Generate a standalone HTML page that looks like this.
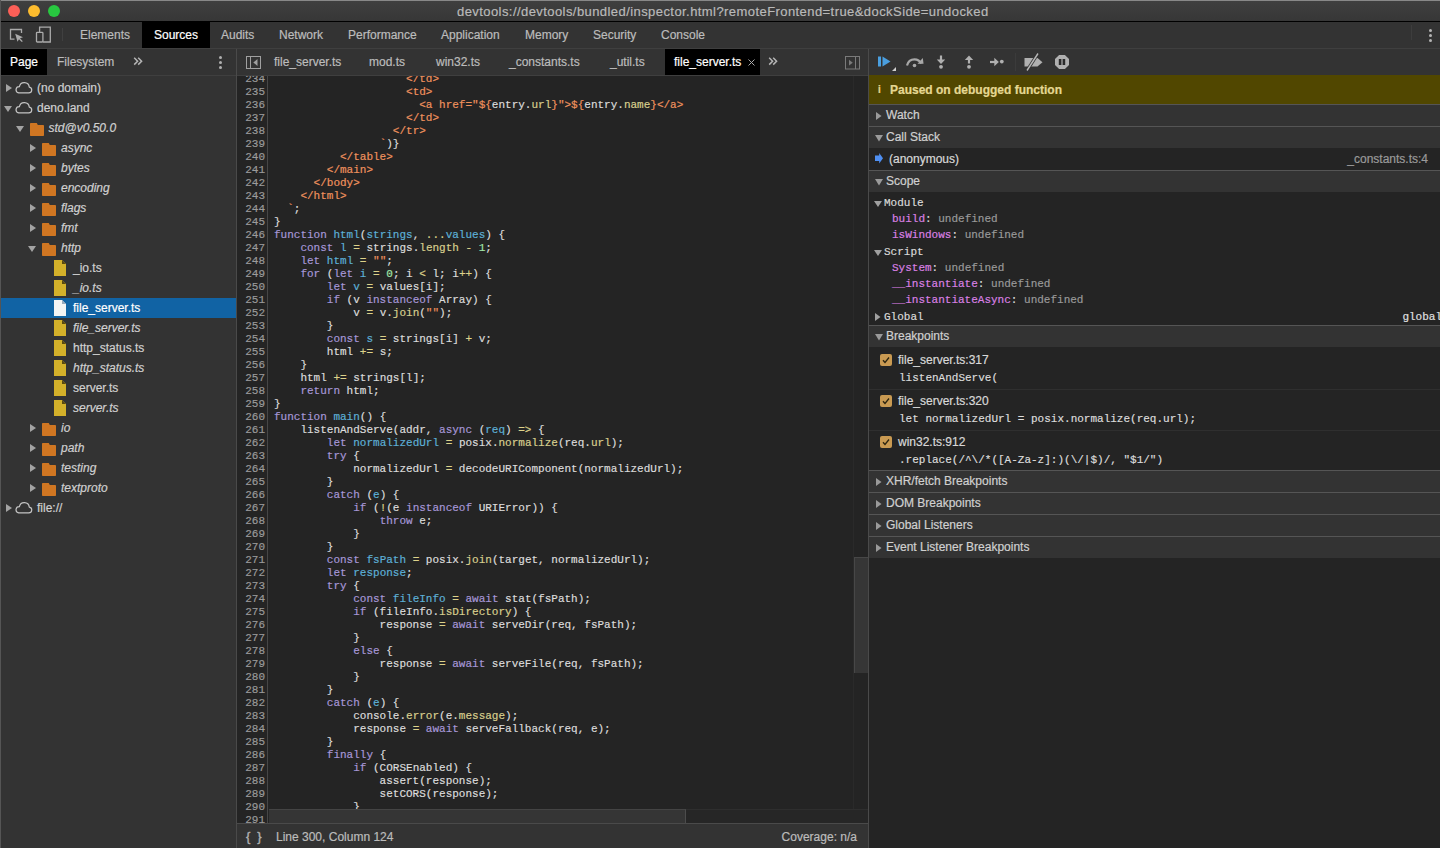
<!DOCTYPE html><html><head><meta charset="utf-8"><style>
*{box-sizing:border-box}
html,body{margin:0;padding:0;width:1440px;height:848px;overflow:hidden;background:#242424;font-family:"Liberation Sans",sans-serif;font-size:12px;color:#cdcdcd;-webkit-text-stroke:0.2px currentColor}
.m{font-family:"Liberation Mono";-webkit-text-stroke:0.18px currentColor}
.a{position:absolute}
.tx{position:absolute;white-space:nowrap}
#title{left:0;top:0;width:1440px;height:22px;background:#3b3b3b;border-top:1px solid #888;border-bottom:1px solid #000;background:linear-gradient(#3f3f3f,#373737)}
#title .t{position:absolute;left:457px;top:3px;font-size:13px;letter-spacing:0.43px;color:#b9b9b9;white-space:nowrap}
.dot{position:absolute;top:4px;width:12px;height:12px;border-radius:50%}
#maintb{left:0;top:22px;width:1440px;height:27px;background:#333;border-bottom:1px solid #3f3f3f}
.mt{position:absolute;top:0;height:26px;line-height:27px;color:#bcbcbc;white-space:nowrap}
.mt.sel{background:#000;color:#fff}
#nav{left:0;top:49px;width:236px;height:799px;background:#333;border-left:1px solid #505050}
#navhdr{left:0;top:0;width:236px;height:27px;border-bottom:1px solid #3f3f3f}
.row{position:absolute;left:0;width:236px;height:20px}
.row .l{position:absolute;top:0;line-height:20px;white-space:nowrap;color:#d0d0d0}
.row.sel{background:#1163a4}
.row.sel .l{color:#fff}
.it{font-style:italic}
#vdiv1{left:236px;top:49px;width:1px;height:799px;background:#4a4a4a}
#editor{left:237px;top:49px;width:631px;height:799px;background:#242424}
#edhdr{left:0;top:0;width:631px;height:27px;background:#333;border-bottom:1px solid #3f3f3f}
#vdiv2{left:868px;top:49px;width:1px;height:799px;background:#4a4a4a}
#side{left:869px;top:49px;width:571px;height:799px;background:#242424}
.ln{position:absolute;left:0;width:28px;height:13px;line-height:13px;text-align:right;font-family:"Liberation Mono";-webkit-text-stroke:0.18px currentColor;font-size:11px;color:#9b9b9b}
.cl{position:absolute;left:37px;height:13px;line-height:13px;white-space:pre;font-family:"Liberation Mono";-webkit-text-stroke:0.18px currentColor;font-size:11px;color:#dcdcdc}
.ck{color:#a797d8}.cd{color:#5db0d7}.co{color:#ddd28a}.cp{color:#d8cf8e}.cn{color:#a1e6a8}.cs{color:#f0925e}
.pn{color:#db80e4}.un{color:#9a9a9a}
</style></head><body>
<div id="title" class="a">
  <div class="dot" style="left:8px;background:#fc5f57"></div>
  <div class="dot" style="left:28px;background:#fdbc2e"></div>
  <div class="dot" style="left:48px;background:#28c840"></div>
  <div class="t">devtools://devtools/bundled/inspector.html?remoteFrontend=true&amp;dockSide=undocked</div>
</div>
<div id="maintb" class="a">
  <svg class="a" style="left:9px;top:6px" width="15" height="14" viewBox="0 0 15 14"><path d="M5.5 11.2H1.5V1.5H12.5V5" fill="none" stroke="#ababab" stroke-width="1.3"/><path d="M6.2 5.7L14 9.3L11 10.3L13.8 13.2L12.8 14L10 11.2L8.5 13.8Z" fill="#ababab"/></svg>
  <svg class="a" style="left:35px;top:4px" width="17" height="17" viewBox="0 0 17 17"><path d="M4.6 6.3V1.2H15.3V16H8" fill="none" stroke="#ababab" stroke-width="1.3"/><rect x="1.5" y="6.3" width="6.4" height="9.7" rx="0.8" fill="none" stroke="#ababab" stroke-width="1.3"/></svg>
  <div class="a" style="left:62px;top:6px;width:1px;height:13px;background:#404040"></div>
  <div class="mt" style="left:80px">Elements</div>
  <div class="mt sel" style="left:142px;width:68px;padding-left:12px">Sources</div>
  <div class="mt" style="left:221px">Audits</div>
  <div class="mt" style="left:279px">Network</div>
  <div class="mt" style="left:348px">Performance</div>
  <div class="mt" style="left:441px">Application</div>
  <div class="mt" style="left:525px">Memory</div>
  <div class="mt" style="left:593px">Security</div>
  <div class="mt" style="left:661px">Console</div>
  <div class="a" style="left:1411px;top:3px;width:1px;height:15px;background:#3d3d3d"></div>
  <div class="a" style="left:1429px;top:7px;width:3px;height:3px;border-radius:50%;background:#b5b5b5"></div>
  <div class="a" style="left:1429px;top:12px;width:3px;height:3px;border-radius:50%;background:#b5b5b5"></div>
  <div class="a" style="left:1429px;top:17px;width:3px;height:3px;border-radius:50%;background:#b5b5b5"></div>
</div>
<div id="nav" class="a">
<div id="navhdr" class="a">
<div class="a" style="left:0;top:0;width:46px;height:26px;background:#000"></div>
<div class="tx" style="left:9px;top:0;line-height:26px;color:#fff">Page</div>
<div class="tx" style="left:56px;top:0;line-height:26px;color:#bcbcbc">Filesystem</div>
<svg class="a" style="left:132px;top:8px" width="10" height="9" viewBox="0 0 10 9"><path d="M1.2 0.8L4.6 4.2L1.2 7.6M5.2 0.8L8.6 4.2L5.2 7.6" fill="none" stroke="#b5b5b5" stroke-width="1.5"/></svg>
<div class="a" style="left:218px;top:7px;width:3px;height:3px;border-radius:50%;background:#b0b0b0"></div>
<div class="a" style="left:218px;top:12px;width:3px;height:3px;border-radius:50%;background:#b0b0b0"></div>
<div class="a" style="left:218px;top:17px;width:3px;height:3px;border-radius:50%;background:#b0b0b0"></div>
</div>
<div class="row" style="top:29px">
<svg class="a" style="left:5px;top:6px" width="6" height="8" viewBox="0 0 6 8"><path d="M0 0L6 4L0 8Z" fill="#a3a3a3"/></svg>
<svg class="a" style="left:12.5px;top:2.5px" width="19" height="13" viewBox="-0.5 -0.5 19 13"><path d="M4.2 11.4H14.3A2.95 2.95 0 0 0 14.8 5.55A5.05 5.05 0 0 0 4.9 5.05A3.2 3.2 0 0 0 4.2 11.4Z" fill="none" stroke="#c4c4c4" stroke-width="1.2"/></svg>
<div class="l" style="left:36px">(no domain)</div>
</div>
<div class="row" style="top:49px">
<svg class="a" style="left:3px;top:8px" width="8" height="6" viewBox="0 0 8 6"><path d="M0 0L8 0L4 6Z" fill="#a3a3a3"/></svg>
<svg class="a" style="left:12.5px;top:2.5px" width="19" height="13" viewBox="-0.5 -0.5 19 13"><path d="M4.2 11.4H14.3A2.95 2.95 0 0 0 14.8 5.55A5.05 5.05 0 0 0 4.9 5.05A3.2 3.2 0 0 0 4.2 11.4Z" fill="none" stroke="#c4c4c4" stroke-width="1.2"/></svg>
<div class="l" style="left:36px">deno.land</div>
</div>
<div class="row" style="top:69px">
<svg class="a" style="left:15px;top:8px" width="8" height="6" viewBox="0 0 8 6"><path d="M0 0L8 0L4 6Z" fill="#a3a3a3"/></svg>
<svg class="a" style="left:29px;top:4.8px" width="14" height="13" viewBox="0 0 14 13"><path d="M0 0.8Q0 0 0.8 0H6.8L7.8 2H13.2Q14 2 14 2.8V12.2Q14 13 13.2 13H0.8Q0 13 0 12.2Z" fill="#d07622"/></svg>
<div class="l it" style="left:47.5px">std@v0.50.0</div>
</div>
<div class="row" style="top:89px">
<svg class="a" style="left:29px;top:6px" width="6" height="8" viewBox="0 0 6 8"><path d="M0 0L6 4L0 8Z" fill="#a3a3a3"/></svg>
<svg class="a" style="left:41px;top:4.8px" width="14" height="13" viewBox="0 0 14 13"><path d="M0 0.8Q0 0 0.8 0H6.8L7.8 2H13.2Q14 2 14 2.8V12.2Q14 13 13.2 13H0.8Q0 13 0 12.2Z" fill="#d07622"/></svg>
<div class="l it" style="left:60px">async</div>
</div>
<div class="row" style="top:109px">
<svg class="a" style="left:29px;top:6px" width="6" height="8" viewBox="0 0 6 8"><path d="M0 0L6 4L0 8Z" fill="#a3a3a3"/></svg>
<svg class="a" style="left:41px;top:4.8px" width="14" height="13" viewBox="0 0 14 13"><path d="M0 0.8Q0 0 0.8 0H6.8L7.8 2H13.2Q14 2 14 2.8V12.2Q14 13 13.2 13H0.8Q0 13 0 12.2Z" fill="#d07622"/></svg>
<div class="l it" style="left:60px">bytes</div>
</div>
<div class="row" style="top:129px">
<svg class="a" style="left:29px;top:6px" width="6" height="8" viewBox="0 0 6 8"><path d="M0 0L6 4L0 8Z" fill="#a3a3a3"/></svg>
<svg class="a" style="left:41px;top:4.8px" width="14" height="13" viewBox="0 0 14 13"><path d="M0 0.8Q0 0 0.8 0H6.8L7.8 2H13.2Q14 2 14 2.8V12.2Q14 13 13.2 13H0.8Q0 13 0 12.2Z" fill="#d07622"/></svg>
<div class="l it" style="left:60px">encoding</div>
</div>
<div class="row" style="top:149px">
<svg class="a" style="left:29px;top:6px" width="6" height="8" viewBox="0 0 6 8"><path d="M0 0L6 4L0 8Z" fill="#a3a3a3"/></svg>
<svg class="a" style="left:41px;top:4.8px" width="14" height="13" viewBox="0 0 14 13"><path d="M0 0.8Q0 0 0.8 0H6.8L7.8 2H13.2Q14 2 14 2.8V12.2Q14 13 13.2 13H0.8Q0 13 0 12.2Z" fill="#d07622"/></svg>
<div class="l it" style="left:60px">flags</div>
</div>
<div class="row" style="top:169px">
<svg class="a" style="left:29px;top:6px" width="6" height="8" viewBox="0 0 6 8"><path d="M0 0L6 4L0 8Z" fill="#a3a3a3"/></svg>
<svg class="a" style="left:41px;top:4.8px" width="14" height="13" viewBox="0 0 14 13"><path d="M0 0.8Q0 0 0.8 0H6.8L7.8 2H13.2Q14 2 14 2.8V12.2Q14 13 13.2 13H0.8Q0 13 0 12.2Z" fill="#d07622"/></svg>
<div class="l it" style="left:60px">fmt</div>
</div>
<div class="row" style="top:189px">
<svg class="a" style="left:27px;top:8px" width="8" height="6" viewBox="0 0 8 6"><path d="M0 0L8 0L4 6Z" fill="#a3a3a3"/></svg>
<svg class="a" style="left:41px;top:4.8px" width="14" height="13" viewBox="0 0 14 13"><path d="M0 0.8Q0 0 0.8 0H6.8L7.8 2H13.2Q14 2 14 2.8V12.2Q14 13 13.2 13H0.8Q0 13 0 12.2Z" fill="#d07622"/></svg>
<div class="l it" style="left:60px">http</div>
</div>
<div class="row" style="top:209px">
<svg class="a" style="left:53px;top:2px" width="12" height="16" viewBox="0 0 12 16"><path d="M0 0H8L12 4V16H0Z" fill="#d4b12a"/><path d="M8 0L12 4H8Z" fill="#5a4a10"/></svg>
<div class="l" style="left:72px">_io.ts</div>
</div>
<div class="row" style="top:229px">
<svg class="a" style="left:53px;top:2px" width="12" height="16" viewBox="0 0 12 16"><path d="M0 0H8L12 4V16H0Z" fill="#d4b12a"/><path d="M8 0L12 4H8Z" fill="#5a4a10"/></svg>
<div class="l it" style="left:72px">_io.ts</div>
</div>
<div class="row sel" style="top:249px">
<svg class="a" style="left:53px;top:2px" width="12" height="16" viewBox="0 0 12 16"><path d="M0 0H8L12 4V16H0Z" fill="#f4f4f4"/><path d="M8 0L12 4H8Z" fill="#9ab"/></svg>
<div class="l" style="left:72px">file_server.ts</div>
</div>
<div class="row" style="top:269px">
<svg class="a" style="left:53px;top:2px" width="12" height="16" viewBox="0 0 12 16"><path d="M0 0H8L12 4V16H0Z" fill="#d4b12a"/><path d="M8 0L12 4H8Z" fill="#5a4a10"/></svg>
<div class="l it" style="left:72px">file_server.ts</div>
</div>
<div class="row" style="top:289px">
<svg class="a" style="left:53px;top:2px" width="12" height="16" viewBox="0 0 12 16"><path d="M0 0H8L12 4V16H0Z" fill="#d4b12a"/><path d="M8 0L12 4H8Z" fill="#5a4a10"/></svg>
<div class="l" style="left:72px">http_status.ts</div>
</div>
<div class="row" style="top:309px">
<svg class="a" style="left:53px;top:2px" width="12" height="16" viewBox="0 0 12 16"><path d="M0 0H8L12 4V16H0Z" fill="#d4b12a"/><path d="M8 0L12 4H8Z" fill="#5a4a10"/></svg>
<div class="l it" style="left:72px">http_status.ts</div>
</div>
<div class="row" style="top:329px">
<svg class="a" style="left:53px;top:2px" width="12" height="16" viewBox="0 0 12 16"><path d="M0 0H8L12 4V16H0Z" fill="#d4b12a"/><path d="M8 0L12 4H8Z" fill="#5a4a10"/></svg>
<div class="l" style="left:72px">server.ts</div>
</div>
<div class="row" style="top:349px">
<svg class="a" style="left:53px;top:2px" width="12" height="16" viewBox="0 0 12 16"><path d="M0 0H8L12 4V16H0Z" fill="#d4b12a"/><path d="M8 0L12 4H8Z" fill="#5a4a10"/></svg>
<div class="l it" style="left:72px">server.ts</div>
</div>
<div class="row" style="top:369px">
<svg class="a" style="left:29px;top:6px" width="6" height="8" viewBox="0 0 6 8"><path d="M0 0L6 4L0 8Z" fill="#a3a3a3"/></svg>
<svg class="a" style="left:41px;top:4.8px" width="14" height="13" viewBox="0 0 14 13"><path d="M0 0.8Q0 0 0.8 0H6.8L7.8 2H13.2Q14 2 14 2.8V12.2Q14 13 13.2 13H0.8Q0 13 0 12.2Z" fill="#d07622"/></svg>
<div class="l it" style="left:60px">io</div>
</div>
<div class="row" style="top:389px">
<svg class="a" style="left:29px;top:6px" width="6" height="8" viewBox="0 0 6 8"><path d="M0 0L6 4L0 8Z" fill="#a3a3a3"/></svg>
<svg class="a" style="left:41px;top:4.8px" width="14" height="13" viewBox="0 0 14 13"><path d="M0 0.8Q0 0 0.8 0H6.8L7.8 2H13.2Q14 2 14 2.8V12.2Q14 13 13.2 13H0.8Q0 13 0 12.2Z" fill="#d07622"/></svg>
<div class="l it" style="left:60px">path</div>
</div>
<div class="row" style="top:409px">
<svg class="a" style="left:29px;top:6px" width="6" height="8" viewBox="0 0 6 8"><path d="M0 0L6 4L0 8Z" fill="#a3a3a3"/></svg>
<svg class="a" style="left:41px;top:4.8px" width="14" height="13" viewBox="0 0 14 13"><path d="M0 0.8Q0 0 0.8 0H6.8L7.8 2H13.2Q14 2 14 2.8V12.2Q14 13 13.2 13H0.8Q0 13 0 12.2Z" fill="#d07622"/></svg>
<div class="l it" style="left:60px">testing</div>
</div>
<div class="row" style="top:429px">
<svg class="a" style="left:29px;top:6px" width="6" height="8" viewBox="0 0 6 8"><path d="M0 0L6 4L0 8Z" fill="#a3a3a3"/></svg>
<svg class="a" style="left:41px;top:4.8px" width="14" height="13" viewBox="0 0 14 13"><path d="M0 0.8Q0 0 0.8 0H6.8L7.8 2H13.2Q14 2 14 2.8V12.2Q14 13 13.2 13H0.8Q0 13 0 12.2Z" fill="#d07622"/></svg>
<div class="l it" style="left:60px">textproto</div>
</div>
<div class="row" style="top:449px">
<svg class="a" style="left:5px;top:6px" width="6" height="8" viewBox="0 0 6 8"><path d="M0 0L6 4L0 8Z" fill="#a3a3a3"/></svg>
<svg class="a" style="left:12.5px;top:2.5px" width="19" height="13" viewBox="-0.5 -0.5 19 13"><path d="M4.2 11.4H14.3A2.95 2.95 0 0 0 14.8 5.55A5.05 5.05 0 0 0 4.9 5.05A3.2 3.2 0 0 0 4.2 11.4Z" fill="none" stroke="#c4c4c4" stroke-width="1.2"/></svg>
<div class="l" style="left:36px">file://</div>
</div>
</div>
<div id="vdiv1" class="a"></div>
<div id="editor" class="a">
<div id="edhdr" class="a">
<svg class="a" style="left:9px;top:7px" width="15" height="13" viewBox="0 0 15 13"><rect x="0.5" y="0.5" width="14" height="12" fill="none" stroke="#a0a0a0"/><path d="M4.5 0.5V12.5" stroke="#a0a0a0"/><path d="M11.5 3V10L7.3 6.5Z" fill="#a0a0a0"/></svg>
<div class="tx" style="left:37px;top:0;line-height:26px;color:#bcbcbc">file_server.ts</div>
<div class="tx" style="left:132px;top:0;line-height:26px;color:#bcbcbc">mod.ts</div>
<div class="tx" style="left:199px;top:0;line-height:26px;color:#bcbcbc">win32.ts</div>
<div class="tx" style="left:272px;top:0;line-height:26px;color:#bcbcbc">_constants.ts</div>
<div class="tx" style="left:373px;top:0;line-height:26px;color:#bcbcbc">_util.ts</div>
<div class="a" style="left:428px;top:0;width:95px;height:26px;background:#000"></div>
<div class="tx" style="left:437px;top:0;line-height:26px;color:#fff">file_server.ts</div>
<svg class="a" style="left:511px;top:10px" width="7" height="7" viewBox="0 0 7 7"><path d="M0.5 0.5L6.5 6.5M6.5 0.5L0.5 6.5" stroke="#b0b0b0" stroke-width="0.95"/></svg>
<svg class="a" style="left:531px;top:8px" width="10" height="9" viewBox="0 0 10 9"><path d="M1.2 0.8L4.6 4.2L1.2 7.6M5.2 0.8L8.6 4.2L5.2 7.6" fill="none" stroke="#b5b5b5" stroke-width="1.5"/></svg>
<svg class="a" style="left:608px;top:7px" width="15" height="14" viewBox="0 0 15 14"><rect x="0.5" y="0.5" width="14" height="12.5" fill="none" stroke="#7a7a7a"/><path d="M10.5 0.5V13" stroke="#7a7a7a"/><path d="M4 3.8V9.6L7.8 6.7Z" fill="#7a7a7a"/></svg>
</div>
<div class="a" id="codevp" style="left:0;top:27px;width:631px;height:747px;overflow:hidden;background:#242424">
<div class="a" style="left:0;top:0;width:31px;height:747px;background:#242424;border-right:1px solid #474747"></div>
<div class="ln" style="top:-3px">234</div>
<div class="cl" style="top:-3px">                    <span class="cs">&lt;/td&gt;</span></div>
<div class="ln" style="top:10px">235</div>
<div class="cl" style="top:10px">                    <span class="cs">&lt;td&gt;</span></div>
<div class="ln" style="top:23px">236</div>
<div class="cl" style="top:23px">                      <span class="cs">&lt;a href=&quot;${</span>entry.<span class="cp">url</span><span class="cs">}&quot;&gt;${</span>entry.<span class="cp">name</span><span class="cs">}&lt;/a&gt;</span></div>
<div class="ln" style="top:36px">237</div>
<div class="cl" style="top:36px">                    <span class="cs">&lt;/td&gt;</span></div>
<div class="ln" style="top:49px">238</div>
<div class="cl" style="top:49px">                  <span class="cs">&lt;/tr&gt;</span></div>
<div class="ln" style="top:62px">239</div>
<div class="cl" style="top:62px">                <span class="cs">`</span>)}</div>
<div class="ln" style="top:75px">240</div>
<div class="cl" style="top:75px">          <span class="cs">&lt;/table&gt;</span></div>
<div class="ln" style="top:88px">241</div>
<div class="cl" style="top:88px">        <span class="cs">&lt;/main&gt;</span></div>
<div class="ln" style="top:101px">242</div>
<div class="cl" style="top:101px">      <span class="cs">&lt;/body&gt;</span></div>
<div class="ln" style="top:114px">243</div>
<div class="cl" style="top:114px">    <span class="cs">&lt;/html&gt;</span></div>
<div class="ln" style="top:127px">244</div>
<div class="cl" style="top:127px">  <span class="cs">`</span>;</div>
<div class="ln" style="top:140px">245</div>
<div class="cl" style="top:140px">}</div>
<div class="ln" style="top:153px">246</div>
<div class="cl" style="top:153px"><span class="ck">function</span> <span class="cd">html</span>(<span class="cd">strings</span>, <span class="co">...</span><span class="cd">values</span>) {</div>
<div class="ln" style="top:166px">247</div>
<div class="cl" style="top:166px">    <span class="ck">const</span> <span class="cd">l</span> <span class="co">=</span> strings.<span class="cp">length</span> <span class="co">-</span> <span class="cn">1</span>;</div>
<div class="ln" style="top:179px">248</div>
<div class="cl" style="top:179px">    <span class="ck">let</span> <span class="cd">html</span> <span class="co">=</span> <span class="cs">&quot;&quot;</span>;</div>
<div class="ln" style="top:192px">249</div>
<div class="cl" style="top:192px">    <span class="ck">for</span> (<span class="ck">let</span> <span class="cd">i</span> <span class="co">=</span> <span class="cn">0</span>; i <span class="co">&lt;</span> l; i<span class="co">++</span>) {</div>
<div class="ln" style="top:205px">250</div>
<div class="cl" style="top:205px">        <span class="ck">let</span> <span class="cd">v</span> <span class="co">=</span> values[i];</div>
<div class="ln" style="top:218px">251</div>
<div class="cl" style="top:218px">        <span class="ck">if</span> (v <span class="ck">instanceof</span> Array) {</div>
<div class="ln" style="top:231px">252</div>
<div class="cl" style="top:231px">            v <span class="co">=</span> v.<span class="cp">join</span>(<span class="cs">&quot;&quot;</span>);</div>
<div class="ln" style="top:244px">253</div>
<div class="cl" style="top:244px">        }</div>
<div class="ln" style="top:257px">254</div>
<div class="cl" style="top:257px">        <span class="ck">const</span> <span class="cd">s</span> <span class="co">=</span> strings[i] <span class="co">+</span> v;</div>
<div class="ln" style="top:270px">255</div>
<div class="cl" style="top:270px">        html <span class="co">+=</span> s;</div>
<div class="ln" style="top:283px">256</div>
<div class="cl" style="top:283px">    }</div>
<div class="ln" style="top:296px">257</div>
<div class="cl" style="top:296px">    html <span class="co">+=</span> strings[l];</div>
<div class="ln" style="top:309px">258</div>
<div class="cl" style="top:309px">    <span class="ck">return</span> html;</div>
<div class="ln" style="top:322px">259</div>
<div class="cl" style="top:322px">}</div>
<div class="ln" style="top:335px">260</div>
<div class="cl" style="top:335px"><span class="ck">function</span> <span class="cd">main</span>() {</div>
<div class="ln" style="top:348px">261</div>
<div class="cl" style="top:348px">    listenAndServe(addr, <span class="ck">async</span> (<span class="cd">req</span>) <span class="co">=&gt;</span> {</div>
<div class="ln" style="top:361px">262</div>
<div class="cl" style="top:361px">        <span class="ck">let</span> <span class="cd">normalizedUrl</span> <span class="co">=</span> posix.<span class="cp">normalize</span>(req.<span class="cp">url</span>);</div>
<div class="ln" style="top:374px">263</div>
<div class="cl" style="top:374px">        <span class="ck">try</span> {</div>
<div class="ln" style="top:387px">264</div>
<div class="cl" style="top:387px">            normalizedUrl <span class="co">=</span> decodeURIComponent(normalizedUrl);</div>
<div class="ln" style="top:400px">265</div>
<div class="cl" style="top:400px">        }</div>
<div class="ln" style="top:413px">266</div>
<div class="cl" style="top:413px">        <span class="ck">catch</span> (<span class="cd">e</span>) {</div>
<div class="ln" style="top:426px">267</div>
<div class="cl" style="top:426px">            <span class="ck">if</span> (<span class="co">!</span>(e <span class="ck">instanceof</span> URIError)) {</div>
<div class="ln" style="top:439px">268</div>
<div class="cl" style="top:439px">                <span class="ck">throw</span> e;</div>
<div class="ln" style="top:452px">269</div>
<div class="cl" style="top:452px">            }</div>
<div class="ln" style="top:465px">270</div>
<div class="cl" style="top:465px">        }</div>
<div class="ln" style="top:478px">271</div>
<div class="cl" style="top:478px">        <span class="ck">const</span> <span class="cd">fsPath</span> <span class="co">=</span> posix.<span class="cp">join</span>(target, normalizedUrl);</div>
<div class="ln" style="top:491px">272</div>
<div class="cl" style="top:491px">        <span class="ck">let</span> <span class="cd">response</span>;</div>
<div class="ln" style="top:504px">273</div>
<div class="cl" style="top:504px">        <span class="ck">try</span> {</div>
<div class="ln" style="top:517px">274</div>
<div class="cl" style="top:517px">            <span class="ck">const</span> <span class="cd">fileInfo</span> <span class="co">=</span> <span class="ck">await</span> stat(fsPath);</div>
<div class="ln" style="top:530px">275</div>
<div class="cl" style="top:530px">            <span class="ck">if</span> (fileInfo.<span class="cp">isDirectory</span>) {</div>
<div class="ln" style="top:543px">276</div>
<div class="cl" style="top:543px">                response <span class="co">=</span> <span class="ck">await</span> serveDir(req, fsPath);</div>
<div class="ln" style="top:556px">277</div>
<div class="cl" style="top:556px">            }</div>
<div class="ln" style="top:569px">278</div>
<div class="cl" style="top:569px">            <span class="ck">else</span> {</div>
<div class="ln" style="top:582px">279</div>
<div class="cl" style="top:582px">                response <span class="co">=</span> <span class="ck">await</span> serveFile(req, fsPath);</div>
<div class="ln" style="top:595px">280</div>
<div class="cl" style="top:595px">            }</div>
<div class="ln" style="top:608px">281</div>
<div class="cl" style="top:608px">        }</div>
<div class="ln" style="top:621px">282</div>
<div class="cl" style="top:621px">        <span class="ck">catch</span> (<span class="cd">e</span>) {</div>
<div class="ln" style="top:634px">283</div>
<div class="cl" style="top:634px">            console.<span class="cp">error</span>(e.<span class="cp">message</span>);</div>
<div class="ln" style="top:647px">284</div>
<div class="cl" style="top:647px">            response <span class="co">=</span> <span class="ck">await</span> serveFallback(req, e);</div>
<div class="ln" style="top:660px">285</div>
<div class="cl" style="top:660px">        }</div>
<div class="ln" style="top:673px">286</div>
<div class="cl" style="top:673px">        <span class="ck">finally</span> {</div>
<div class="ln" style="top:686px">287</div>
<div class="cl" style="top:686px">            <span class="ck">if</span> (CORSEnabled) {</div>
<div class="ln" style="top:699px">288</div>
<div class="cl" style="top:699px">                assert(response);</div>
<div class="ln" style="top:712px">289</div>
<div class="cl" style="top:712px">                setCORS(response);</div>
<div class="ln" style="top:725px">290</div>
<div class="cl" style="top:725px">            }</div>
<div class="ln" style="top:738px">291</div>
<div class="cl" style="top:738px"></div>
<div class="a" style="left:32px;top:733px;width:599px;height:14px;background:#262626;border-top:1px solid #2e2e2e"></div>
<div class="a" style="left:32px;top:733px;width:417px;height:14px;background:#353535;border-top:1px solid #444;border-right:1px solid #4c4c4c"></div>
<div class="a" style="left:616px;top:0;width:1px;height:733px;background:#2a2a2a"></div>
<div class="a" style="left:617px;top:481px;width:14px;height:116px;background:#363636;border-left:1px solid #474747;border-top:1px solid #474747"></div>
</div>
<div class="a" style="left:0;top:774px;width:631px;height:25px;background:#333;border-top:1px solid #4a4a4a">
<div class="tx" style="left:9px;top:1px;line-height:24px;font-size:13px;color:#b0b0b0;letter-spacing:1.6px;-webkit-text-stroke:0.4px currentColor">{ }</div>
<div class="tx" style="left:39px;top:1px;line-height:24px;color:#bcbcbc">Line 300, Column 124</div>
<div class="tx" style="right:11px;top:1px;line-height:24px;color:#bcbcbc">Coverage: n/a</div>
</div>
</div>
<div id="vdiv2" class="a"></div>
<div id="side" class="a">
<div class="a" style="left:0;top:0;width:571px;height:27px;background:#333;border-bottom:1px solid #3f3f3f">
<svg class="a" style="left:9px;top:7px" width="20" height="16" viewBox="0 0 20 16"><rect x="0" y="0.5" width="3" height="10" fill="#4a9fe0"/><path d="M4.5 0.5L12.5 5.5L4.5 10.5Z" fill="#4a9fe0"/><path d="M14 15H18V11Z" fill="#d0d0d0"/></svg>
<svg class="a" style="left:36px;top:8px" width="19" height="11" viewBox="0 0 19 11"><path d="M2 8.5C3 4.5 6 2.3 9.5 2.3C12.5 2.3 15 4 16.3 6.5" fill="none" stroke="#a8a8a8" stroke-width="2.2"/><path d="M12.5 6.8L18.5 6.8L17.8 1Z" fill="#a8a8a8"/><circle cx="9.5" cy="8.5" r="1.8" fill="#a8a8a8"/></svg>
<svg class="a" style="left:67px;top:6px" width="10" height="14" viewBox="0 0 10 14"><path d="M5 0.5V6" stroke="#b0b0b0" stroke-width="2.2"/><path d="M0.8 4.5H9.2L5 9Z" fill="#b0b0b0"/><circle cx="5" cy="11.8" r="1.9" fill="#b0b0b0"/></svg>
<svg class="a" style="left:95px;top:6px" width="10" height="14" viewBox="0 0 10 14"><path d="M5 3V8.5" stroke="#b0b0b0" stroke-width="2.2"/><path d="M0.8 5H9.2L5 0.5Z" fill="#b0b0b0"/><circle cx="5" cy="11.8" r="1.9" fill="#b0b0b0"/></svg>
<svg class="a" style="left:121px;top:8px" width="14" height="10" viewBox="0 0 14 10"><path d="M0 5H5.5" stroke="#b0b0b0" stroke-width="2.2"/><path d="M4.3 0.8V9.2L8.8 5Z" fill="#b0b0b0"/><circle cx="11.8" cy="4.6" r="1.9" fill="#b0b0b0"/></svg>
<div class="a" style="left:146px;top:4px;width:1px;height:18px;background:#3b3b3b"></div>
<svg class="a" style="left:155px;top:4px" width="20" height="18" viewBox="0 0 20 18"><path d="M0.5 5H13.5L18.5 9.3L13.5 13.5H0.5Z" fill="#b0b0b0"/><path d="M3 17.5L14 0.5" stroke="#333" stroke-width="3.2"/><path d="M3 17.5L14 0.5" stroke="#b8b8b8" stroke-width="1.4"/></svg>
<svg class="a" style="left:186px;top:6px" width="14" height="14" viewBox="0 0 14 14"><path d="M4.1 0H9.9L14 4.1V9.9L9.9 14H4.1L0 9.9V4.1Z" fill="#b0b0b0"/><rect x="3.8" y="4" width="2.6" height="6" fill="#2a2a2a"/><rect x="7.6" y="4" width="2.6" height="6" fill="#2a2a2a"/></svg>
</div>
<div class="a" style="left:0;top:26px;width:571px;height:30px;background:#514700;border-bottom:1px solid #5a5a5a">
<div class="tx" style="left:9px;top:0;line-height:30px;font-weight:bold;color:#e6d891;font-size:10px">i</div>
<div class="tx" style="left:21px;top:0;line-height:30px;font-weight:bold;color:#e5d792">Paused on debugged function</div>
</div>
<div class="a" style="left:0;top:55px;width:571px;height:22px;background:#333;border-top:1px solid #555">
<svg class="a" style="left:7px;top:7px" width="6" height="8" viewBox="0 0 6 8"><path d="M0 0L5.5 4L0 8Z" fill="#9a9a9a"/></svg>
<div class="tx" style="left:17px;top:0;line-height:21px;color:#d0d0d0">Watch</div>
</div>
<div class="a" style="left:0;top:77px;width:571px;height:22px;background:#333;border-top:1px solid #555">
<svg class="a" style="left:6px;top:8px" width="8" height="7" viewBox="0 0 8 7"><path d="M0 0H8L4 6.5Z" fill="#9a9a9a"/></svg>
<div class="tx" style="left:17px;top:0;line-height:21px;color:#d0d0d0">Call Stack</div>
</div>
<div class="a" style="left:0;top:99px;width:571px;height:22px;background:#242424">
<svg class="a" style="left:6px;top:5px" width="8" height="11" viewBox="0 0 8 11"><path d="M0 2.5H4.2V0L8 5.3L4.2 10.5V8H0Z" fill="#4f8ff2"/></svg>
<div class="tx" style="left:20px;top:1px;line-height:21px;color:#d8d8d8">(anonymous)</div>
<div class="tx" style="right:12px;top:1px;line-height:21px;color:#9a9a9a">_constants.ts:4</div>
</div>
<div class="a" style="left:0;top:121px;width:571px;height:22px;background:#333;border-top:1px solid #555">
<svg class="a" style="left:6px;top:8px" width="8" height="7" viewBox="0 0 8 7"><path d="M0 0H8L4 6.5Z" fill="#9a9a9a"/></svg>
<div class="tx" style="left:17px;top:0;line-height:21px;color:#d0d0d0">Scope</div>
</div>
<svg class="a" style="left:5px;top:152px" width="8" height="6" viewBox="0 0 8 6"><path d="M0 0H8L4 6Z" fill="#a0a0a0"/></svg>
<div class="tx" style="left:15px;top:147px;line-height:14px;font-family:'Liberation Mono';font-size:11px;-webkit-text-stroke:0.18px currentColor"><span style="color:#dadada">Module</span></div>
<div class="tx" style="left:23px;top:163px;line-height:14px;font-family:'Liberation Mono';font-size:11px;-webkit-text-stroke:0.18px currentColor"><span class="pn">build</span><span style="color:#ddd">:</span> <span class="un">undefined</span></div>
<div class="tx" style="left:23px;top:179px;line-height:14px;font-family:'Liberation Mono';font-size:11px;-webkit-text-stroke:0.18px currentColor"><span class="pn">isWindows</span><span style="color:#ddd">:</span> <span class="un">undefined</span></div>
<svg class="a" style="left:5px;top:201px" width="8" height="6" viewBox="0 0 8 6"><path d="M0 0H8L4 6Z" fill="#a0a0a0"/></svg>
<div class="tx" style="left:15px;top:196px;line-height:14px;font-family:'Liberation Mono';font-size:11px;-webkit-text-stroke:0.18px currentColor"><span style="color:#dadada">Script</span></div>
<div class="tx" style="left:23px;top:212px;line-height:14px;font-family:'Liberation Mono';font-size:11px;-webkit-text-stroke:0.18px currentColor"><span class="pn">System</span><span style="color:#ddd">:</span> <span class="un">undefined</span></div>
<div class="tx" style="left:23px;top:228px;line-height:14px;font-family:'Liberation Mono';font-size:11px;-webkit-text-stroke:0.18px currentColor"><span class="pn">__instantiate</span><span style="color:#ddd">:</span> <span class="un">undefined</span></div>
<div class="tx" style="left:23px;top:244px;line-height:14px;font-family:'Liberation Mono';font-size:11px;-webkit-text-stroke:0.18px currentColor"><span class="pn">__instantiateAsync</span><span style="color:#ddd">:</span> <span class="un">undefined</span></div>
<svg class="a" style="left:6px;top:264px" width="6" height="8" viewBox="0 0 6 8"><path d="M0 0L5.5 4L0 8Z" fill="#a0a0a0"/></svg>
<div class="tx" style="left:15px;top:261px;line-height:14px;font-family:'Liberation Mono';font-size:11px;-webkit-text-stroke:0.18px currentColor"><span style="color:#dadada">Global</span></div>
<div class="tx" style="right:-2px;top:261px;line-height:14px;font-family:'Liberation Mono';font-size:11px;-webkit-text-stroke:0.18px currentColor;color:#e0e0e0">global</div>
<div class="a" style="left:0;top:276px;width:571px;height:22px;background:#333;border-top:1px solid #555">
<svg class="a" style="left:6px;top:8px" width="8" height="7" viewBox="0 0 8 7"><path d="M0 0H8L4 6.5Z" fill="#9a9a9a"/></svg>
<div class="tx" style="left:17px;top:0;line-height:21px;color:#d0d0d0">Breakpoints</div>
</div>
<svg class="a" style="left:11px;top:305px" width="12" height="12" viewBox="0 0 12 12"><rect x="0" y="0" width="12" height="12" rx="2" fill="#c99a52"/><path d="M3 6.2L5 8.5L9 3.5" fill="none" stroke="#2b2410" stroke-width="1.3"/></svg>
<div class="tx" style="left:29px;top:304px;line-height:14px;color:#d8d8d8">file_server.ts:317</div>
<div class="tx" style="left:30px;top:322px;line-height:14px;font-family:'Liberation Mono';font-size:11px;-webkit-text-stroke:0.18px currentColor;color:#dcdcdc">listenAndServe(</div>
<div class="a" style="left:0;top:340px;width:571px;height:1px;background:#2f2f2f"></div>
<svg class="a" style="left:11px;top:346px" width="12" height="12" viewBox="0 0 12 12"><rect x="0" y="0" width="12" height="12" rx="2" fill="#c99a52"/><path d="M3 6.2L5 8.5L9 3.5" fill="none" stroke="#2b2410" stroke-width="1.3"/></svg>
<div class="tx" style="left:29px;top:345px;line-height:14px;color:#d8d8d8">file_server.ts:320</div>
<div class="tx" style="left:30px;top:363px;line-height:14px;font-family:'Liberation Mono';font-size:11px;-webkit-text-stroke:0.18px currentColor;color:#dcdcdc">let normalizedUrl = posix.normalize(req.url);</div>
<div class="a" style="left:0;top:381px;width:571px;height:1px;background:#2f2f2f"></div>
<svg class="a" style="left:11px;top:387px" width="12" height="12" viewBox="0 0 12 12"><rect x="0" y="0" width="12" height="12" rx="2" fill="#c99a52"/><path d="M3 6.2L5 8.5L9 3.5" fill="none" stroke="#2b2410" stroke-width="1.3"/></svg>
<div class="tx" style="left:29px;top:386px;line-height:14px;color:#d8d8d8">win32.ts:912</div>
<div class="tx" style="left:30px;top:404px;line-height:14px;font-family:'Liberation Mono';font-size:11px;-webkit-text-stroke:0.18px currentColor;color:#dcdcdc">.replace(/^\/*([A-Za-z]:)(\/|$)/, &quot;$1/&quot;)</div>
<div class="a" style="left:0;top:421px;width:571px;height:22px;background:#333;border-top:1px solid #555">
<svg class="a" style="left:7px;top:7px" width="6" height="8" viewBox="0 0 6 8"><path d="M0 0L5.5 4L0 8Z" fill="#9a9a9a"/></svg>
<div class="tx" style="left:17px;top:0;line-height:21px;color:#d0d0d0">XHR/fetch Breakpoints</div>
</div>
<div class="a" style="left:0;top:443px;width:571px;height:22px;background:#333;border-top:1px solid #555">
<svg class="a" style="left:7px;top:7px" width="6" height="8" viewBox="0 0 6 8"><path d="M0 0L5.5 4L0 8Z" fill="#9a9a9a"/></svg>
<div class="tx" style="left:17px;top:0;line-height:21px;color:#d0d0d0">DOM Breakpoints</div>
</div>
<div class="a" style="left:0;top:465px;width:571px;height:22px;background:#333;border-top:1px solid #555">
<svg class="a" style="left:7px;top:7px" width="6" height="8" viewBox="0 0 6 8"><path d="M0 0L5.5 4L0 8Z" fill="#9a9a9a"/></svg>
<div class="tx" style="left:17px;top:0;line-height:21px;color:#d0d0d0">Global Listeners</div>
</div>
<div class="a" style="left:0;top:487px;width:571px;height:22px;background:#333;border-top:1px solid #555">
<svg class="a" style="left:7px;top:7px" width="6" height="8" viewBox="0 0 6 8"><path d="M0 0L5.5 4L0 8Z" fill="#9a9a9a"/></svg>
<div class="tx" style="left:17px;top:0;line-height:21px;color:#d0d0d0">Event Listener Breakpoints</div>
</div>
</div>
<div class="a" style="left:0;top:0;width:1px;height:848px;background:#555"></div>
</body></html>
